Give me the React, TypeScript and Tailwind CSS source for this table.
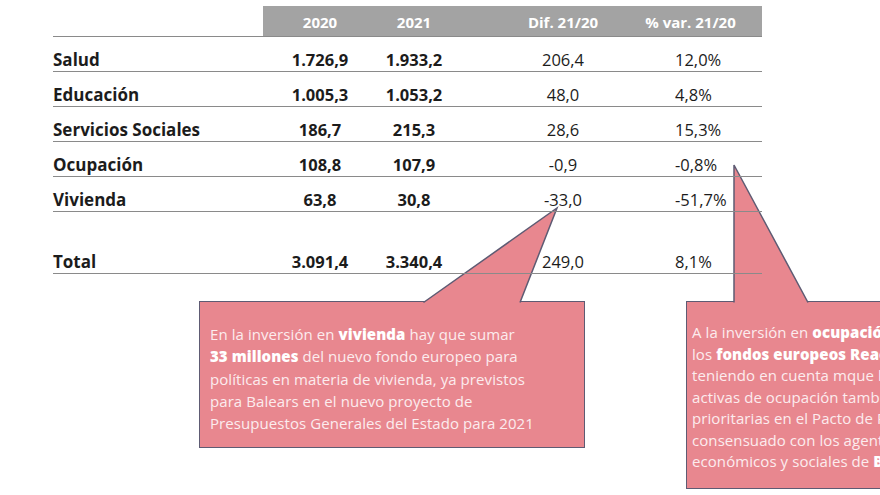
import React from "react";

const rows = [
  { label: "Salud", a: "1.726,9", b: "1.933,2", d: "206,4", p: "12,0%" },
  { label: "Educación", a: "1.005,3", b: "1.053,2", d: "48,0", p: "4,8%" },
  { label: "Servicios Sociales", a: "186,7", b: "215,3", d: "28,6", p: "15,3%" },
  { label: "Ocupación", a: "108,8", b: "107,9", d: "-0,9", p: "-0,8%" },
  { label: "Vivienda", a: "63,8", b: "30,8", d: "-33,0", p: "-51,7%" },
];

const cols = "grid grid-cols-[210px_114px_74px_224px_87px]";

function Row({ r, extra = "" }: { r: (typeof rows)[number]; extra?: string }) {
  return (
    <div className={`${cols} h-[35px] items-end pb-[1px] border-b-[1.5px] border-[#8a8a8a] text-[16.5px] leading-[20px] text-[#1c1c1c] ${extra}`}>
      <span className="font-bold text-[17px] whitespace-nowrap">{r.label}</span>
      <span className="text-center font-bold">{r.a}</span>
      <span className="text-center font-bold">{r.b}</span>
      <span className="text-center">{r.d}</span>
      <span className="text-center pr-[56px]">{r.p}</span>
    </div>
  );
}

export default function App() {
  return (
    <div className="relative w-[880px] h-[495px] overflow-hidden bg-white font-['Open_Sans',sans-serif]">
      {/* table */}
      <div className="relative z-20 ml-[53px] pt-[6px] w-[709px]">
        <div className={`${cols} h-[31px] border-b-[1.5px] border-[#8a8a8a] text-[15px] font-bold text-white`}>
          <span />
          <span className="bg-[#a3a3a3] flex items-center justify-center pt-[2px]">2020</span>
          <span className="bg-[#a3a3a3] flex items-center justify-center pt-[2px]">2021</span>
          <span className="bg-[#a3a3a3] flex items-center justify-center pt-[2px]">Dif. 21/20</span>
          <span className="bg-[#a3a3a3] flex items-center justify-center pt-[2px] pr-[56px]">
            <span className="whitespace-nowrap">% var. 21/20</span>
          </span>
        </div>
        {rows.map((r) => (
          <Row key={r.label} r={r} />
        ))}
        <Row r={{ label: "Total", a: "3.091,4", b: "3.340,4", d: "249,0", p: "8,1%" }} extra="mt-[27px]" />
      </div>

      {/* pointers */}
      <svg className="absolute left-0 top-0 z-10" width="880" height="495">
        <polygon points="423.5,302.5 557,208 520,302.5 520,305 423.5,305" fill="#e8878f" />
        <polyline points="423.5,302.5 557,208 520,302.5" fill="none" stroke="#5e5b73" strokeWidth="1.5" />
        <polygon points="734,165 808,302.5 808,305 734,305" fill="#e8878f" />
        <polyline points="734,302.5 734,165 808,302.5" fill="none" stroke="#5e5b73" strokeWidth="1.5" />
      </svg>

      {/* callouts */}
      <div className="relative z-0 flex items-start mt-[27px]">
        <div className="ml-[199px] w-[386px] h-[147px] shrink-0 bg-[#e8878f] border-[1.5px] border-[#5e5b73] pt-[21px] pl-[10px] text-[15px] leading-[22.3px] text-[#fcecee] tracking-[0.005em] whitespace-nowrap">
          <p>
            En la inversión en <b className="text-white font-extrabold">vivienda</b> hay que sumar
          </p>
          <p>
            <b className="text-white font-extrabold">33 millones</b> del nuevo fondo europeo para
          </p>
          <p>políticas en materia de vivienda, ya previstos</p>
          <p>para Balears en el nuevo proyecto de</p>
          <p>Presupuestos Generales del Estado para 2021</p>
        </div>
        <div className="ml-[101px] w-[300px] h-[188px] shrink-0 bg-[#e8878f] border-[1.5px] border-[#5e5b73] pt-[20px] pl-[5px] text-[15px] leading-[21.5px] text-[#fcecee] tracking-[0.005em] whitespace-nowrap">
          <p>
            A la inversión en <b className="text-white font-extrabold">ocupación</b> se suman
          </p>
          <p>
            los <b className="text-white font-extrabold">fondos europeos React-EU</b>,
          </p>
          <p>teniendo en cuenta mque las políticas</p>
          <p>activas de ocupación también son</p>
          <p>prioritarias en el Pacto de Reactivación</p>
          <p>consensuado con los agentes</p>
          <p>
            económicos y sociales de <b className="text-white font-extrabold">Baleares</b>
          </p>
        </div>
      </div>
    </div>
  );
}
